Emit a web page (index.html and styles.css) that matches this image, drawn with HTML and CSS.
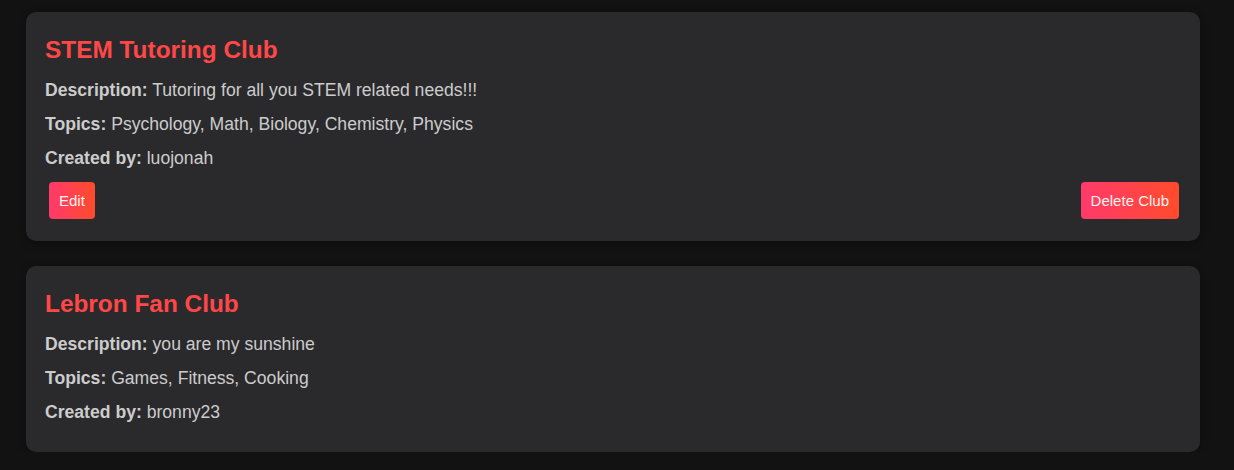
FILE: index.html
```html
<!DOCTYPE html>
<html lang="en">
<head>
<meta charset="utf-8">
<title>Clubs</title>
<link rel="stylesheet" href="styles.css">
</head>
<body>
<main class="club-list">
  <section class="club-card">
    <h2 class="club-title">STEM Tutoring Club</h2>
    <p class="club-line"><strong>Description:</strong> Tutoring for all you STEM related needs!!!</p>
    <p class="club-line"><strong>Topics:</strong> Psychology, Math, Biology, Chemistry, Physics</p>
    <p class="club-line"><strong>Created by:</strong> luojonah</p>
    <div class="club-actions">
      <button class="btn btn-edit">Edit</button>
      <button class="btn btn-delete">Delete Club</button>
    </div>
  </section>
  <section class="club-card">
    <h2 class="club-title">Lebron Fan Club</h2>
    <p class="club-line"><strong>Description:</strong> you are my sunshine</p>
    <p class="club-line"><strong>Topics:</strong> Games, Fitness, Cooking</p>
    <p class="club-line"><strong>Created by:</strong> bronny23</p>
  </section>
</main>
</body>
</html>
```
FILE: styles.css
```css
html, body {
  margin: 0;
  padding: 0;
  background: #121212;
}
body {
  font-family: "Liberation Sans", Arial, sans-serif;
  color: #cccccc;
}
.club-list {
  display: flex;
  flex-direction: column;
  gap: 25px;
  padding: 12px 34px 0 26px;
}
.club-card {
  background: #2a2a2d;
  border-radius: 10px;
  padding: 24px 19px 18px;
  box-shadow: 0 2px 8px rgba(0, 0, 0, 0.3);
}
.club-title {
  margin: 0 0 14px;
  font-size: 24.4px;
  font-weight: bold;
  color: #ff4747;
}
.club-line {
  margin: 10px 0;
  font-size: 17.6px;
  line-height: 24px;
}
.club-line strong {
  color: #cccccc;
}
.club-actions {
  display: flex;
  justify-content: space-between;
  align-items: center;
  margin-top: 12px;
  margin-bottom: 4px;
}
.btn {
  border: none;
  border-radius: 4px;
  background: linear-gradient(90deg, #ff3a6c, #ff4b2b);
  color: #fff3ef;
  font-family: "Liberation Sans", Arial, sans-serif;
  font-size: 15px;
  line-height: 17px;
  padding: 10px 10px;
  cursor: pointer;
}
.btn-edit {
  margin-left: 4px;
}
.btn-delete {
  margin-right: 2px;
}
```
